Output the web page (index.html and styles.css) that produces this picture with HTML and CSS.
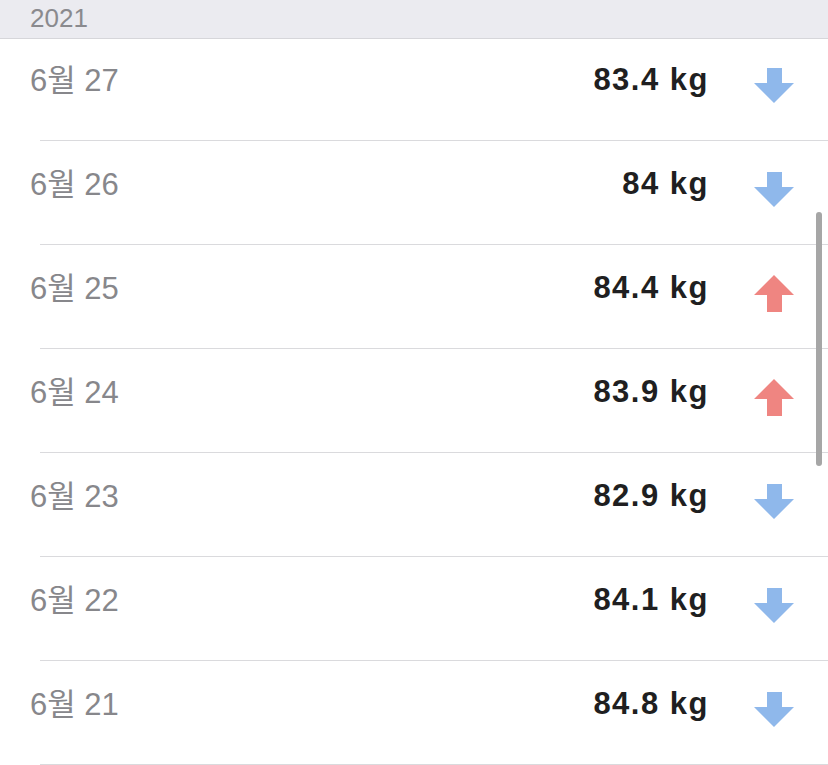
FILE: index.html
```html
<!DOCTYPE html>
<html lang="ko">
<head>
<meta charset="utf-8">
<title>체중 기록</title>
<link rel="stylesheet" href="styles.css">
</head>
<body>
<header class="section-header">2021</header>
<ul class="list">
  <li class="row"><span class="date">6월 27</span><span class="weight">83.4 kg</span><svg class="arrow down" viewBox="0 0 40 35"><polygon points="13,0 28,0 28,15 40,15 20,35 0,15 13,15"/></svg></li>
  <li class="row"><span class="date">6월 26</span><span class="weight">84 kg</span><svg class="arrow down" viewBox="0 0 40 35"><polygon points="13,0 28,0 28,15 40,15 20,35 0,15 13,15"/></svg></li>
  <li class="row"><span class="date">6월 25</span><span class="weight">84.4 kg</span><svg class="arrow up" viewBox="0 0 40 37"><polygon points="20,0 40,20 28,20 28,37 13,37 13,20 0,20"/></svg></li>
  <li class="row"><span class="date">6월 24</span><span class="weight">83.9 kg</span><svg class="arrow up" viewBox="0 0 40 37"><polygon points="20,0 40,20 28,20 28,37 13,37 13,20 0,20"/></svg></li>
  <li class="row"><span class="date">6월 23</span><span class="weight">82.9 kg</span><svg class="arrow down" viewBox="0 0 40 35"><polygon points="13,0 28,0 28,15 40,15 20,35 0,15 13,15"/></svg></li>
  <li class="row"><span class="date">6월 22</span><span class="weight">84.1 kg</span><svg class="arrow down" viewBox="0 0 40 35"><polygon points="13,0 28,0 28,15 40,15 20,35 0,15 13,15"/></svg></li>
  <li class="row"><span class="date">6월 21</span><span class="weight">84.8 kg</span><svg class="arrow down" viewBox="0 0 40 35"><polygon points="13,0 28,0 28,15 40,15 20,35 0,15 13,15"/></svg></li>
</ul>
<div class="scrollbar"></div>
</body>
</html>
```
FILE: styles.css
```css
html, body {
  margin: 0;
  padding: 0;
  background: #ffffff;
  font-family: "Liberation Sans", Arial, "Noto Sans CJK KR", sans-serif;
  overflow: hidden;
}

.section-header {
  position: sticky;
  top: 0;
  z-index: 1;
  height: 38px;
  line-height: 36px;
  padding-left: 30px;
  background: #ebebf0;
  border-bottom: 1px solid #d6d6da;
  color: #8a8a8e;
  font-size: 26px;
}

.list {
  list-style: none;
  margin: -2px 0 0 0;
  padding: 0;
}

.row {
  display: flex;
  align-items: center;
  box-sizing: border-box;
  height: 104px;
  padding: 0 34px 19px 30px;
  background: linear-gradient(#dadadd, #dadadd) no-repeat right bottom / calc(100% - 40px) 1px;
}

.date {
  flex: 1;
  color: #87878b;
  font-size: 31px;
  margin-bottom: 5px;
}

.weight {
  color: #1f1f21;
  font-size: 31px;
  font-weight: bold;
  letter-spacing: 1.5px;
  margin-right: 45px;
}

.arrow {
  width: 40px;
  flex: none;
  margin-top: 12px;
}

.arrow.down {
  height: 35px;
  fill: #8fb8eb;
}

.arrow.up {
  height: 37px;
  fill: #ef8581;
}

.scrollbar {
  position: fixed;
  right: 6px;
  top: 212px;
  width: 6px;
  height: 254px;
  border-radius: 3px;
  background: #a6a6a6;
}
```
